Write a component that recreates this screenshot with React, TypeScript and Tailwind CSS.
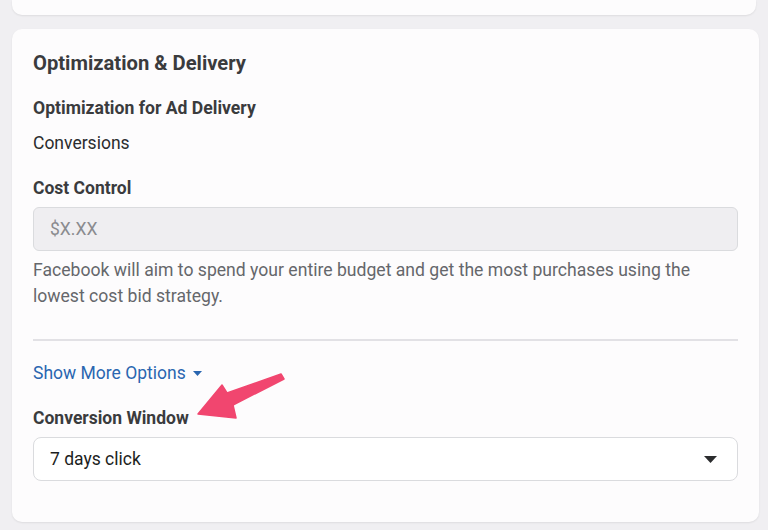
export default function App() {
  return (
    <div className="relative h-[530px] w-[768px] overflow-hidden bg-[#f0eff2] font-['Roboto',sans-serif] text-[#1c1e21]">
      <div className="mx-3 h-[15px] rounded-b-[10px] bg-[#fdfcfd] shadow-[0_1px_2px_rgba(0,0,0,0.08)]" />

      <div className="ml-3 mr-[9px] mt-[14px] rounded-[10px] bg-[#fdfcfd] px-[21px] pb-[41px] pt-[21px] shadow-[0_1px_2px_rgba(0,0,0,0.08)]">
        <h2 className="mt-[1px] text-[20.2px] font-bold leading-[24px] text-[#3a3b3d]">Optimization &amp; Delivery</h2>

        <div className="mt-[23px] text-[17.6px] font-bold leading-[20px] text-[#3a3b3d]">Optimization for Ad Delivery</div>
        <div className="mt-[15px] text-[17.5px] leading-[20px] text-[#2b2c2e]">Conversions</div>

        <div className="mt-[25px] text-[17.5px] font-bold leading-[20px] text-[#3a3b3d]">Cost Control</div>
        <div className="mt-[9px] flex h-[44px] items-center rounded-[6px] border border-[#dadbde] bg-[#efeef1] px-4 text-[17.5px] text-[#8a8b8f]">
          $X.XX
        </div>
        <p className="mt-[6px] text-[17.6px] leading-[26px] text-[#65676b]">
          Facebook will aim to spend your entire budget and get the most purchases using the lowest cost bid strategy.
        </p>

        <div className="mt-[30px] h-[2px] bg-[#e2e1e5]" />

        <button className="mt-[22px] flex items-center gap-[7px] text-[17.5px] leading-[20px] text-[#2a66b0]">
          Show More Options
          <svg width="9" height="5" viewBox="0 0 9 5">
            <path d="M0 0h9L4.5 5z" fill="#2a66b0" />
          </svg>
        </button>

        <div className="mt-[25px] text-[17.5px] font-bold leading-[20px] text-[#3a3b3d]">Conversion Window</div>
        <div className="mt-[9px] flex h-[44px] items-center justify-between rounded-[8px] border border-[#dadbde] bg-white pl-4 pr-[20px] text-[17.5px] text-[#1c1e21]">
          <span>7 days click</span>
          <svg width="13" height="7" viewBox="0 0 13 7">
            <path d="M0 0h13L6.5 7z" fill="#2b2c2e" />
          </svg>
        </div>
      </div>

      <svg className="absolute left-0 top-0" width="768" height="530" viewBox="0 0 768 530">
        <path
          d="M198 414 L222 385 L227 393 L281 374 L284 379 L233 405 L236 418 Z"
          fill="#f1466f"
          strokeLinejoin="round"
          stroke="#f1466f"
          strokeWidth="1.5"
        />
      </svg>
    </div>
  );
}
